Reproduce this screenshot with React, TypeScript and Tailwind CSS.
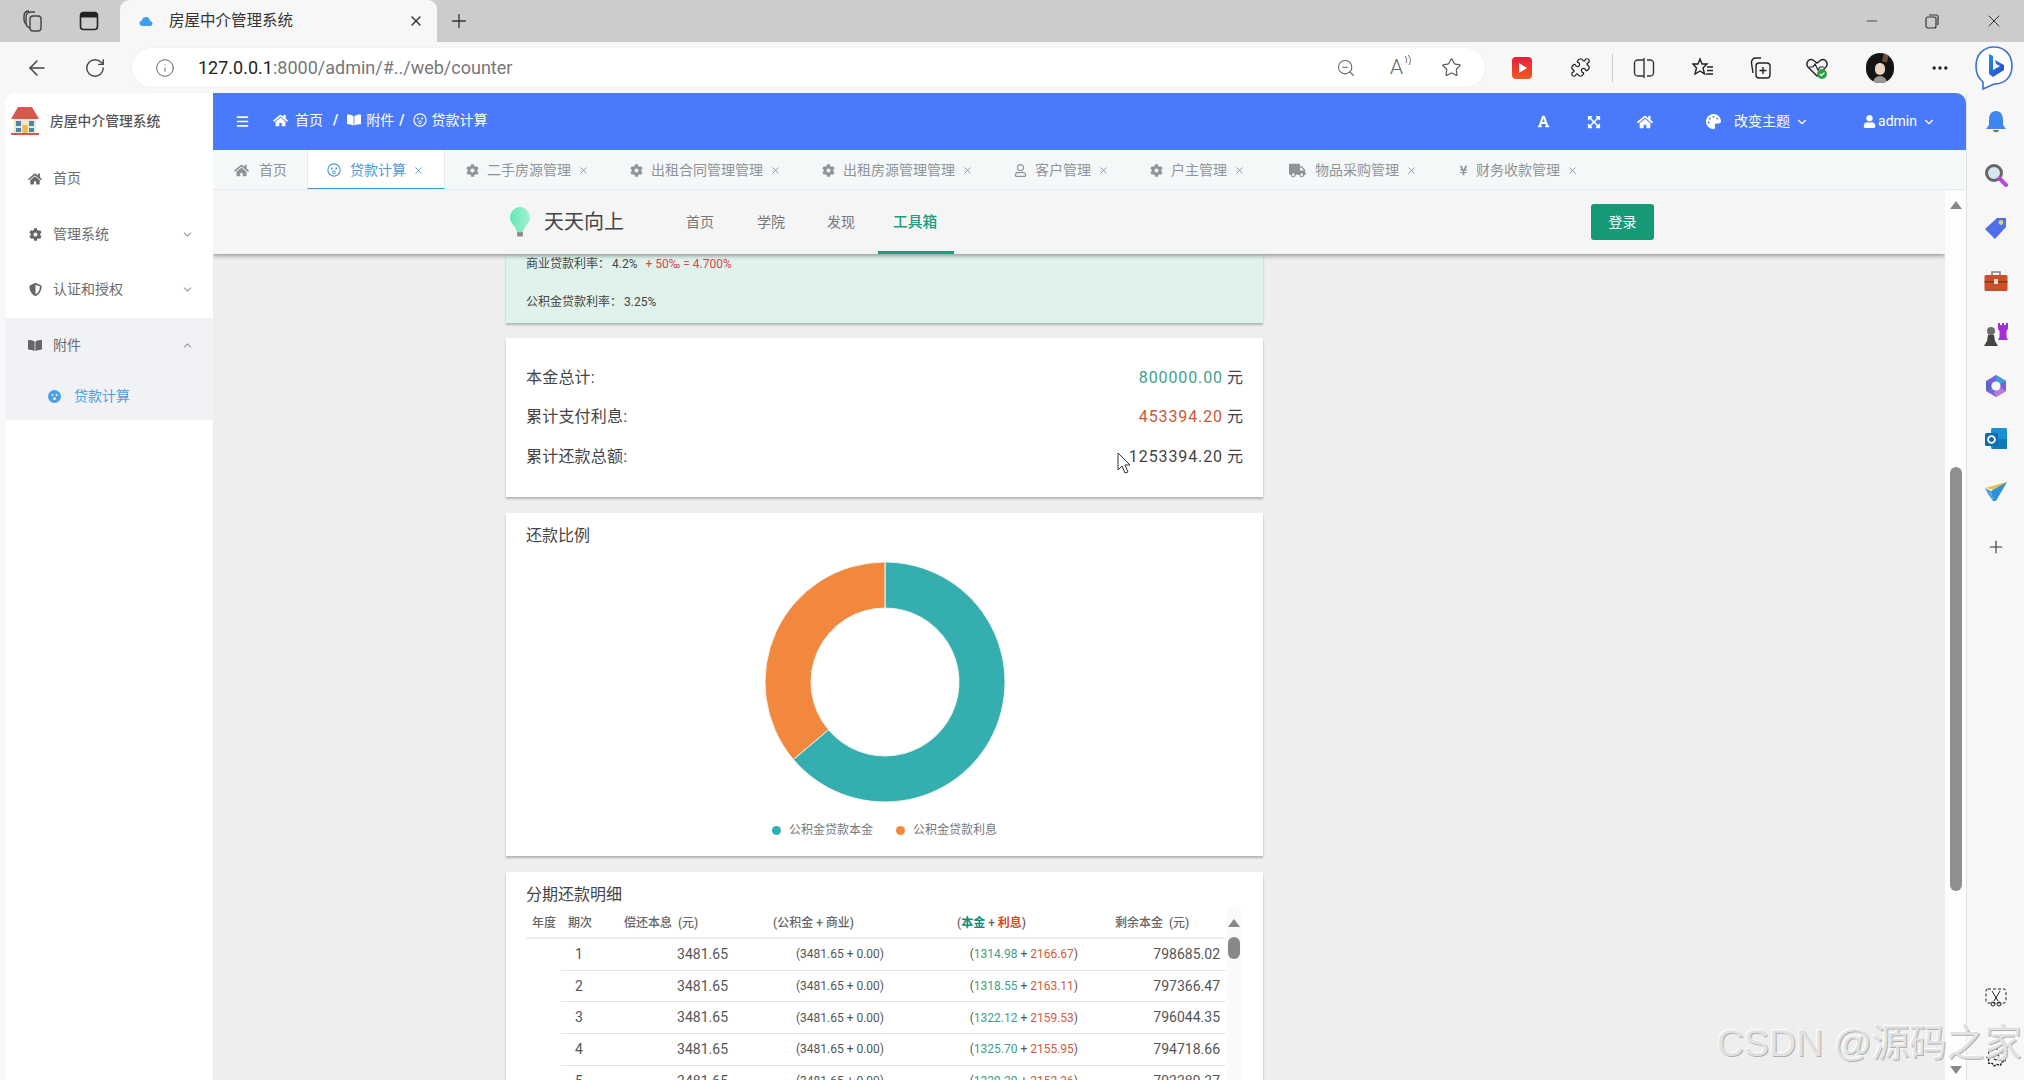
import React from "react";
import { ArrowLeft, RotateCw, Info, ZoomOut, Star, Puzzle, Plus, X, Minus, MoreHorizontal, ChevronDown, ChevronUp, Menu } from "lucide-react";
import { FaHome, FaCog, FaShieldAlt, FaBookOpen, FaRegUser, FaTruck, FaYenSign, FaPalette, FaExpandArrowsAlt, FaFont, FaUser } from "react-icons/fa";

const Surprise = ({ size = 14, filled = false }: { size?: number; filled?: boolean }) => (
  <svg width={size} height={size} viewBox="0 0 14 14" className="shrink-0">
    <circle cx="7" cy="7" r={filled ? 7 : 6.1} fill={filled ? "currentColor" : "none"} stroke="currentColor" strokeWidth={filled ? 0 : 1.2} />
    <circle cx="4.8" cy="5.4" r="1" fill={filled ? "#fff" : "currentColor"} />
    <circle cx="9.2" cy="5.4" r="1" fill={filled ? "#fff" : "currentColor"} />
    <circle cx="7" cy="9.3" r="1.4" fill={filled ? "#fff" : "none"} stroke={filled ? "none" : "currentColor"} />
  </svg>
);

const HouseLogo = () => (
  <svg width="30" height="30" viewBox="0 0 30 30" className="shrink-0">
    <rect x="4" y="11" width="22" height="16" fill="#efe6cf" />
    <path d="M1 13 L8 1 L22 1 L29 13 Z" fill="#d8584e" />
    <rect x="6" y="15" width="5" height="5" fill="#4c86a8" />
    <rect x="19" y="15" width="5" height="5" fill="#4c86a8" />
    <rect x="6" y="22" width="5" height="4" fill="#4c86a8" />
    <rect x="19" y="22" width="5" height="4" fill="#4c86a8" />
    <rect x="12.5" y="19" width="5" height="8" fill="#e5b94e" />
    <rect x="1" y="27" width="28" height="2" fill="#d8584e" />
  </svg>
);

const Bulb = () => (
  <svg width="22" height="30" viewBox="0 0 22 30" className="shrink-0">
    <defs>
      <linearGradient id="bulb" x1="0" y1="0" x2="1" y2="0">
        <stop offset="0" stopColor="#5fe8b8" />
        <stop offset="1" stopColor="#a8f0d2" />
      </linearGradient>
    </defs>
    <path d="M11 0 C17 0 21 6 21 11 C21 16 15 19 14 25 L8 25 C7 19 1 16 1 11 C1 6 5 0 11 0 Z" fill="url(#bulb)" />
    <rect x="8" y="25" width="6" height="4.5" rx="1" fill="#8a8f8e" />
  </svg>
);

const Side = ({ icon, label, arrow }: { icon: React.ReactNode; label: string; arrow?: "down" | "up" }) => (
  <div className="flex h-[55.5px] items-center pl-[23px] pr-[19px] text-[14px] text-[#6b6b6b]">
    <span className="flex w-[14px] justify-center text-[#666]">{icon}</span>
    <span className="ml-[11px]">{label}</span>
    {arrow === "down" && <ChevronDown size={13} className="ml-auto text-[#999]" />}
    {arrow === "up" && <ChevronUp size={13} className="ml-auto text-[#999]" />}
  </div>
);

const Tab = ({ icon, label, active, noClose, gap = 8 }: { icon: React.ReactNode; label: string; active?: boolean; noClose?: boolean; gap?: number }) => (
  <div
    className={
      active
        ? "flex h-full items-center border-x border-[#e4e7ed] border-b border-b-[#4a9bdc] bg-white pl-[19px] pr-[20px] pt-[2px] text-[14px] text-[#4a9bdc]"
        : "flex h-full items-center pl-[21px] pr-[20px] pt-[2px] text-[14px] text-[#909399]"
    }
  >
    <span className="flex shrink-0 items-center justify-center">{icon}</span>
    <span style={{ marginLeft: gap }}>{label}</span>
    {!noClose && <X size={11} className="ml-[7px]" />}
  </div>
);

const rows = [
  ["1", "1314.98", "2166.67", "798685.02"],
  ["2", "1318.55", "2163.11", "797366.47"],
  ["3", "1322.12", "2159.53", "796044.35"],
  ["4", "1325.70", "2155.95", "794718.66"],
  ["5", "1329.29", "2152.36", "793389.37"],
];

const Row = ({ label, value, color }: { label: string; value: string; color: string }) => (
  <div className="flex h-[39.5px] items-center justify-between text-[16px] text-[#444]">
    <span className="tracking-[0.2px]">{label}</span>
    <span>
      <span className={color + " tracking-[0.9px]"}>{value}</span> 元
    </span>
  </div>
);

const railIcons = [
  <svg key="bell" width="22" height="24" viewBox="0 0 22 24"><path d="M11 1 C16 1 18 5 18 10 L18 15 L21 19 L1 19 L4 15 L4 10 C4 5 6 1 11 1 Z" fill="#3f86ee" /><path d="M8 20 H14 C14 23 8 23 8 20 Z" fill="#6b7280" /></svg>,
  <svg key="search" width="24" height="24" viewBox="0 0 24 24"><circle cx="10" cy="10" r="7.5" fill="#d6e6ee" stroke="#666" strokeWidth="3" /><path d="M15.5 15.5 L22 22" stroke="#b44cd8" strokeWidth="4" strokeLinecap="round" /></svg>,
  <svg key="tag" width="24" height="24" viewBox="0 0 24 24"><path d="M1 13 L13 2 L22 2 L22 11 L11 23 Z" fill="#4f6fe8" /><circle cx="17" cy="6.5" r="2.4" fill="#d9d36a" /></svg>,
  <svg key="box" width="24" height="22" viewBox="0 0 24 22"><path d="M8 6 V2 H16 V6" fill="none" stroke="#888" strokeWidth="1.6" /><rect x="0.5" y="5" width="23" height="16" rx="1.5" fill="#c9502b" /><rect x="0.5" y="11" width="23" height="1.5" fill="#8e3518" /><rect x="10" y="9" width="4" height="5" fill="#eadcd2" /></svg>,
  <svg key="chess" width="26" height="26" viewBox="0 0 26 26"><path d="M15 2 H17 V4 H19 V2 H21 V4 H23 V2 H25 V8 L23.5 10 V16 L25 19 H15 L16.5 16 V10 L15 8 Z" fill="#a32fd6" /><circle cx="8" cy="10" r="4" fill="#6b6b6b" /><path d="M5 14 H11 L12 20 L15 25 H1 L4 20 Z" fill="#444" /></svg>,
  <svg key="m365" width="24" height="24" viewBox="0 0 24 24"><path d="M12 1 L22 7 V17 L12 23 L2 17 V7 Z" fill="#7a62d8" /><path d="M12 1 L22 7 L17 10 L12 7 Z" fill="#3f9fd8" /><path d="M2 7 L7 10 V15 L2 17 Z" fill="#5c64c8" /><path d="M17 14 L22 17 L12 23 L10 18 Z" fill="#b97ae0" /><circle cx="12" cy="12" r="4.6" fill="#f7f7f7" /></svg>,
  <svg key="outlook" width="24" height="24" viewBox="0 0 24 24"><rect x="7" y="1" width="16" height="21" rx="1.5" fill="#1b8fd6" /><path d="M9 12 L23 12 V22 H9 Z" fill="#0f78b8" /><rect x="1" y="6" width="13" height="13" rx="1.5" fill="#0f6cb0" /><circle cx="7.5" cy="12.5" r="3.4" fill="none" stroke="#fff" strokeWidth="1.8" /></svg>,
  <svg key="send" width="24" height="22" viewBox="0 0 24 22"><path d="M1 7 L23 1 L17 10 Z" fill="#e8bf3c" /><path d="M1 7 L7 10 L9 20 L4 13 Z" fill="#4da0d8" /><path d="M7 10 L23 1 L12 20 L9 20 Z" fill="#2f8fd8" /></svg>,
];

export default function App() {
  return (
    <div className="relative flex h-[1080px] w-[2024px] flex-col overflow-hidden bg-[#f7f7f7] font-['Roboto','Noto_Sans_CJK_SC',sans-serif]">
      {/* Browser tab strip */}
      <div className="flex h-[42px] shrink-0 items-center bg-[#cccccc] text-[#333]">
        <span className="ml-[23px] flex w-[20px] justify-center">
          <svg width="20" height="22" viewBox="0 0 20 22" fill="none" stroke="#444" strokeWidth="1.4"><rect x="7" y="6" width="11" height="15" rx="3" /><path d="M7 18 C4 17 3 15 3 13 V7 C3 4 5 2 8 2 L12 2" /><path d="M4 15 C2 13 1 12 1 10 V6 C1 3 3 1 6 1" /></svg>
        </span>
        <span className="ml-[36px] flex w-[20px] justify-center">
          <svg width="20" height="20" viewBox="0 0 20 20" fill="none"><rect x="1.5" y="1.5" width="17" height="17" rx="3" stroke="#222" strokeWidth="1.6" /><rect x="2" y="2" width="16" height="4.5" fill="#222" /></svg>
        </span>
        <div className="ml-[21px] flex h-[42px] w-[317px] items-center rounded-t-[9px] bg-[#f7f7f7]">
          <svg width="14" height="11" viewBox="0 0 14 11" className="ml-[19px]"><path d="M3.5 10 C1.5 10 0.5 8.5 0.5 7 C0.5 5.5 1.5 4.5 3 4.4 C3.3 2 5 1 7 1 C9.5 1 11 2.8 11 5 C12.5 5 13.5 6 13.5 7.5 C13.5 9 12.5 10 11 10 Z" fill="#3f9ee8" /></svg>
          <span className="ml-[16px] pt-[2px] text-[15.5px] text-[#333]">房屋中介管理系统</span>
          <X size={16} className="ml-auto mr-[13px] text-[#333]" />
        </div>
        <Plus size={22} strokeWidth={1.4} className="ml-[11px] text-[#333]" />
        <div className="ml-auto flex items-center">
          <Minus size={16} strokeWidth={1.3} className="text-[#333]" />
          <svg width="14" height="15" viewBox="0 0 14 15" fill="none" stroke="#333" strokeWidth="1.2" className="ml-[45px]"><rect x="1" y="3" width="10" height="11" rx="2" /><path d="M4 1 H11 C12.5 1 13 2 13 3 V11" /></svg>
          <X size={20} strokeWidth={1.2} className="ml-[45px] mr-[20px] text-[#333]" />
        </div>
      </div>

      {/* Browser toolbar */}
      <div className="flex h-[51px] shrink-0 items-center bg-[#f7f7f7] pl-[25px] text-[#444]">
        <ArrowLeft size={24} strokeWidth={1.5} />
        <RotateCw size={22} strokeWidth={1.5} className="ml-[35px]" />
        <div className="ml-[26px] flex h-[39px] w-[1353px] items-center rounded-full bg-white pl-[23px] pr-[23px] shadow-[0_0_2px_rgba(0,0,0,0.08)]">
          <Info size={20} strokeWidth={1.2} className="text-[#666]" />
          <span className="ml-[23px] text-[18px]">
            <span className="text-[#222]">127.0.0.1</span>
            <span className="text-[#777]">:8000/admin/#../web/counter</span>
          </span>
          <ZoomOut size={20} strokeWidth={1.3} className="ml-auto text-[#666]" />
          <span className="relative ml-[34px] flex w-[20px] items-center text-[21px] font-light leading-none text-[#666]">
            A
            <svg width="8" height="12" viewBox="0 0 8 12" fill="none" stroke="#666" className="absolute -right-[2px] -top-[2px]"><path d="M1 1 C3 3 3 6 2 8" /><path d="M4 0 C7 3 7 7 5 10" /></svg>
          </span>
          <Star size={21} strokeWidth={1.3} className="ml-[31px] text-[#555]" />
        </div>
        <svg width="22" height="24" viewBox="0 0 22 24" className="ml-[26px]"><defs><linearGradient id="play" x1="0" y1="0" x2="0" y2="1"><stop offset="0" stopColor="#e5203f" /><stop offset="1" stopColor="#f05a1e" /></linearGradient></defs><rect x="1" y="1" width="20" height="22" rx="4" fill="url(#play)" /><path d="M8 7 L16 12 L8 17 Z" fill="#fff" /></svg>
        <Puzzle size={21} strokeWidth={1.4} className="ml-[37px] text-[#222]" />
        <span className="ml-[21px] h-[28px] w-[1px] bg-[#c8c8c8]" />
        <svg width="22" height="22" viewBox="0 0 22 22" fill="none" stroke="#333" strokeWidth="1.4" className="ml-[20px]"><path d="M11 3 H5 C3 3 1.5 4.5 1.5 6 V16 C1.5 17.5 3 19 5 19 H11" /><path d="M14 3 H17 C19 3 20.5 4.5 20.5 6 V16 C20.5 17.5 19 19 17 19 H14" /><path d="M11 1 V21" /></svg>
        <svg width="22" height="22" viewBox="0 0 22 22" fill="none" stroke="#222" strokeWidth="1.4" className="ml-[37px]"><path d="M8 2 L10 7 L15 7 L11 11 L12.5 17 L8 14 L3 17 L4.5 11 L1 7 L6 7 Z" /><path d="M15 10 H21 M15 13.5 H21 M14 17 H21" /></svg>
        <svg width="22" height="24" viewBox="0 0 22 24" fill="none" stroke="#222" strokeWidth="1.4" className="ml-[36px]"><path d="M3 17 L1.5 7 C1.5 4 3 2 6 2 L11 2" /><rect x="6" y="7" width="14" height="15" rx="3" /><path d="M13 11 V18 M9.5 14.5 H16.5" /></svg>
        <svg width="24" height="24" viewBox="0 0 24 24" className="ml-[33px]"><path d="M12 20 L3 11 C0 7 4 2 8 4 L12 7 L16 4 C20 2 24 7 21 11 Z" fill="none" stroke="#222" strokeWidth="1.4" /><path d="M4 11 H8 L10 8 L13 14 L15 11 H19" fill="none" stroke="#222" strokeWidth="1.2" /><circle cx="17" cy="18" r="5" fill="#2f9e44" /><path d="M14.8 18 L16.5 19.6 L19.4 16.6" fill="none" stroke="#fff" strokeWidth="1.2" /></svg>
        <span className="relative ml-[37px] flex h-[30px] w-[28px] items-center justify-center overflow-hidden rounded-full bg-[#141414]">
          <span className="mt-[2px] h-[12px] w-[10px] rounded-full bg-[#e8d5c6]" />
          <span className="absolute bottom-0 h-[7px] w-[14px] rounded-t-full bg-[#999]" />
          <span className="absolute right-[6px] top-0 h-[9px] w-[5px] rotate-12 bg-[#6b4d3a]" />
        </span>
        <MoreHorizontal size={20} className="ml-[36px] text-[#222]" />
        <svg width="40" height="46" viewBox="0 0 40 46" className="ml-[24px]"><defs><linearGradient id="bing" x1="0" y1="0" x2="1" y2="1"><stop offset="0" stopColor="#1f8fe8" /><stop offset="1" stopColor="#2b46c8" /></linearGradient></defs><path d="M20 2 C31 2 38 10 38 21 C38 33 30 39 20 39 L9 44 L9 37 C4 33 2 28 2 21 C2 10 9 2 20 2 Z" fill="#fff" stroke="#3b6fd4" strokeWidth="1.6" /><path d="M15 9 L19 11 V25 L26 21 L22 19 L21 15 L30 20 V25 L19 32 L15 29 Z" fill="url(#bing)" /></svg>
      </div>

      {/* Page */}
      <div className="flex min-h-0 flex-1 pl-[5px]">
        {/* Sidebar */}
        <aside className="flex w-[208px] shrink-0 flex-col rounded-tl-[10px] bg-white">
          <div className="flex h-[58px] shrink-0 items-center pb-[2px] pl-[5px] text-[13.8px] font-medium text-[#555]">
            <HouseLogo />
            <span className="ml-[10px]">房屋中介管理系统</span>
          </div>
          <Side icon={<FaHome size={14} />} label="首页" />
          <Side icon={<FaCog size={13} />} label="管理系统" arrow="down" />
          <Side icon={<FaShieldAlt size={13} />} label="认证和授权" arrow="down" />
          <div className="bg-[#f0f2f5]">
            <Side icon={<FaBookOpen size={15} />} label="附件" arrow="up" />
            <div className="flex h-[47px] items-center pl-[43px] text-[14px] text-[#4a9fe5]">
              <Surprise size={13} filled />
              <span className="ml-[13px]">贷款计算</span>
            </div>
          </div>
        </aside>

        {/* Main */}
        <main className="flex w-[1753px] shrink-0 flex-col">
          <header className="flex h-[57px] shrink-0 items-center rounded-tr-[10px] bg-[#4a7afc] pl-[22px] pr-[30px] text-[14px] text-white">
            <Menu size={15} strokeWidth={2.6} />
            <span className="ml-[23px] flex items-center pb-[3px]">
              <FaHome size={15} />
              <span className="ml-[7px]">首页</span>
              <span className="ml-[10px] font-bold">/</span>
              <FaBookOpen size={14} className="ml-[9px]" />
              <span className="ml-[5px]">附件</span>
              <span className="ml-[5px] font-bold">/</span>
              <span className="ml-[9px]"><Surprise size={14} /></span>
              <span className="ml-[4px]">贷款计算</span>
            </span>
            <div className="ml-auto flex items-center">
              <FaFont size={13} />
              <FaExpandArrowsAlt size={14} className="ml-[37px]" />
              <FaHome size={16} className="ml-[36px]" />
              <FaPalette size={15} className="ml-[53px]" />
              <span className="ml-[13px]">改变主题</span>
              <ChevronDown size={14} className="ml-[5px]" />
              <FaUser size={13} className="ml-[54px]" />
              <span className="ml-[2px]">admin</span>
              <ChevronDown size={14} className="ml-[5px]" />
            </div>
          </header>

          <nav className="flex h-[40px] shrink-0 items-center border-b border-[#e4e7ed] bg-[#f5f8f8]">
            <Tab icon={<FaHome size={15} />} label="首页" noClose gap={10} />
            <Tab icon={<Surprise size={14} />} label="贷款计算" active gap={9} />
            <Tab icon={<FaCog size={13} />} label="二手房源管理" />
            <Tab icon={<FaCog size={13} />} label="出租合同管理管理" />
            <Tab icon={<FaCog size={13} />} label="出租房源管理管理" />
            <Tab icon={<FaRegUser size={13} />} label="客户管理" />
            <Tab icon={<FaCog size={13} />} label="户主管理" />
            <Tab icon={<FaTruck size={17} className="ml-[3px]" />} label="物品采购管理" gap={9} />
            <Tab icon={<FaYenSign size={11} />} label="财务收款管理" gap={7} />
          </nav>

          <div className="flex min-h-0 flex-1">
            {/* Scrolled page */}
            <div className="flex min-w-0 flex-1 flex-col overflow-hidden bg-[#eeeeee]">
              <div className="z-10 flex h-[64px] shrink-0 items-center bg-[#f5f5f5] pl-[296px] pr-[291px] shadow-[0_2px_4px_rgba(0,0,0,0.35)]">
                <Bulb />
                <span className="ml-[13px] text-[20px] text-[#444]">天天向上</span>
                <div className="ml-[62px] flex h-full items-center text-[14px] text-[#777]">
                  <span>首页</span>
                  <span className="ml-[43px]">学院</span>
                  <span className="ml-[42px]">发现</span>
                  <span className="relative ml-[38px] flex h-full items-center text-[14.7px] font-medium text-[#1b9e7b]">
                    工具箱
                    <span className="absolute -left-[15px] -right-[17px] bottom-0 h-[3px] bg-[#1b9e7b]" />
                  </span>
                </div>
                <button className="ml-auto h-[36px] w-[63px] rounded-[3px] bg-[#159a78] text-[14px] text-white">登录</button>
              </div>

              <div className="ml-[293px] flex w-[757px] flex-col">
                <section className="h-[69px] bg-[#e0f2ec] px-[20px] text-[12px] leading-[20px] text-[#444] shadow-[0_2px_2px_rgba(0,0,0,0.25)]">
                  <div>
                    商业贷款利率：<span className="ml-[2px]">4.2%</span>
                    <span className="ml-[8px] text-[#d5474f]">+ 50‰ = 4.700%</span>
                  </div>
                  <div className="mt-[18px]">
                    公积金贷款利率：<span className="ml-[2px]">3.25%</span>
                  </div>
                </section>

                <section className="relative mt-[15px] h-[159px] bg-white px-[20px] pt-[20px] shadow-[0_2px_2px_rgba(0,0,0,0.25)]">
                  <Row label="本金总计:" value="800000.00" color="text-[#45a08c]" />
                  <Row label="累计支付利息:" value="453394.20" color="text-[#c9583c]" />
                  <Row label="累计还款总额:" value="1253394.20" color="text-[#444]" />
                  <svg width="14" height="22" viewBox="0 0 14 22" className="absolute left-[611px] top-[114px]">
                    <path d="M1 1 L1 18 L5 14 L8 21 L11 20 L8 13 L13 13 Z" fill="#fff" stroke="#333" strokeWidth="1" />
                  </svg>
                </section>

                <section className="mt-[16px] flex h-[343px] flex-col bg-white pt-[11px] shadow-[0_2px_2px_rgba(0,0,0,0.25)]">
                  <h3 className="pl-[20px] text-[16px] leading-[24px] text-[#444]">还款比例</h3>
                  <svg width="240" height="240" viewBox="0 0 240 240" className="mx-auto mt-[14px] shrink-0">
                    <path d="M120 0 A120 120 0 1 1 28.34 197.46 L63.48 167.77 A74 74 0 1 0 120 46 Z" fill="#35aeb0" stroke="#eef6f2" strokeWidth="1" />
                    <path d="M28.34 197.46 A120 120 0 0 1 120 0 L120 46 A74 74 0 0 0 63.48 167.77 Z" fill="#f2883e" stroke="#eef6f2" strokeWidth="1" />
                  </svg>
                  <div className="mt-[18px] flex items-center justify-center text-[12px] leading-[20px] text-[#777]">
                    <span className="h-[9px] w-[9px] rounded-full bg-[#35aeb0]" />
                    <span className="ml-[8px]">公积金贷款本金</span>
                    <span className="ml-[23px] h-[9px] w-[9px] rounded-full bg-[#f2883e]" />
                    <span className="ml-[8px]">公积金贷款利息</span>
                  </div>
                </section>

                <section className="mt-[16px] bg-white pl-[20px] pt-[11px] pb-[10px] shadow-[0_2px_2px_rgba(0,0,0,0.25)]">
                  <h3 className="text-[16px] leading-[24px] text-[#444]">分期还款明细</h3>
                  <div className="flex">
                    <div className="w-[700px]">
                      <div className="grid h-[32px] grid-cols-[42px_56px_149px_184px_158px_1fr] items-center border-b-2 border-[#eeeeee] pt-[2px] text-[12px] font-medium text-[#666]">
                        <span className="pl-[6px]">年度</span>
                        <span>期次</span>
                        <span>偿还本息&nbsp; (元)</span>
                        <span>(公积金 + 商业)</span>
                        <span>
                          (<span className="font-bold text-[#0e8c78]">本金</span> + <span className="font-bold text-[#d54a26]">利息</span>)
                        </span>
                        <span>剩余本金&nbsp; (元)</span>
                      </div>
                      <div className="ml-[35px]">
                        {rows.map((r) => (
                          <div key={r[0]} className="grid h-[31.7px] grid-cols-[36px_131px_156px_194px_142px_5px] items-center border-b border-[#e3e3e3] text-[14px] text-[#555]">
                            <span className="text-center">{r[0]}</span>
                            <span className="text-right">3481.65</span>
                            <span className="text-right text-[12px]">(3481.65 + 0.00)</span>
                            <span className="text-right text-[12px]">
                              (<span className="text-[#3f9d8a]">{r[1]}</span> + <span className="text-[#cf5c3c]">{r[2]}</span>)
                            </span>
                            <span className="text-right">{r[3]}</span>
                            <span />
                          </div>
                        ))}
                      </div>
                    </div>
                    <div className="ml-[1px] flex h-[190px] w-[14px] flex-col items-center bg-[#fafafa]">
                      <span className="mt-[12px] h-0 w-0 border-x-[6px] border-b-[8px] border-x-transparent border-b-[#888]" />
                      <span className="mt-[10px] h-[22px] w-[12px] rounded-[6px] bg-[#888]" />
                    </div>
                  </div>
                </section>
              </div>
            </div>

            {/* Page scrollbar */}
            <div className="flex w-[21px] shrink-0 flex-col items-center bg-[#fdfdfd]">
              <span className="mt-[11px] h-0 w-0 border-x-[6px] border-b-[8px] border-x-transparent border-b-[#888]" />
              <span className="mt-[258px] h-[424px] w-[12px] rounded-[6px] bg-[#8f8f8f]" />
              <span className="mt-auto mb-[6px] h-0 w-0 border-x-[6px] border-t-[8px] border-x-transparent border-t-[#888]" />
            </div>
          </div>
        </main>

        {/* Edge rail */}
        <aside className="flex w-[58px] shrink-0 flex-col items-center border-l border-[#e2e2e2] pt-[3px]">
          <div className="flex flex-col items-center">
            {railIcons.map((ic, i) => (
              <div key={i} className="flex h-[52.8px] items-center justify-center">{ic}</div>
            ))}
            <Plus size={20} strokeWidth={1.3} className="mt-[19px] text-[#333]" />
          </div>
          <svg width="22" height="20" viewBox="0 0 22 20" fill="none" stroke="#222" className="mt-auto">
            <rect x="1" y="1" width="20" height="14" rx="2" strokeDasharray="3 2" />
            <path d="M7 3 L13 13 M15 3 L9 13" />
            <circle cx="8" cy="16" r="2" />
            <circle cx="14" cy="16" r="2" />
          </svg>
          <svg width="22" height="22" viewBox="0 0 24 24" fill="none" stroke="#222" strokeWidth="1.4" strokeDasharray="3 1" className="mt-[38px] mb-[12px]">
            <circle cx="12" cy="12" r="3" />
            <path d="M12 2 L14 5 L18 4 L19 8 L22 10 L20 13 L22 16 L18 18 L17 21 L13 20 L10 22 L8 19 L4 19 L4 15 L2 12 L4 9 L4 5 L8 5 Z" />
          </svg>
        </aside>
      </div>

      {/* Watermark over the page */}
      <span className="pointer-events-none absolute left-[1717px] top-[1022px] whitespace-nowrap font-['Liberation_Sans','Noto_Sans_CJK_SC',sans-serif] text-[37.5px] leading-[42px] text-[#e2e2e2] [text-shadow:1px_1px_0_#b0b0b0,-1px_-1px_0_#fff]">
        CSDN @源码之家
      </span>
    </div>
  );
}
